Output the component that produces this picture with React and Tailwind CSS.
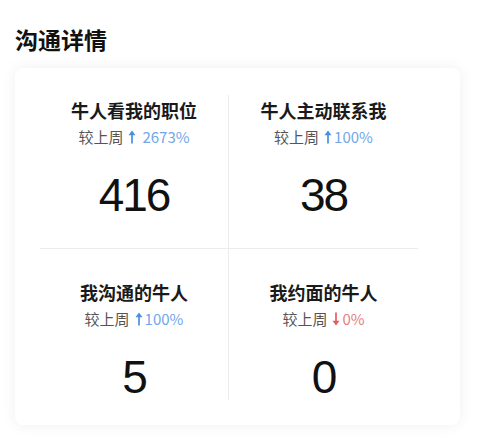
const stats = [
  { title: "牛人看我的职位", trend: "up", pct: "2673%", gap: true, value: "416" },
  { title: "牛人主动联系我", trend: "up", pct: "100%", value: "38" },
  { title: "我沟通的牛人", trend: "up", pct: "100%", value: "5" },
  { title: "我约面的牛人", trend: "down", pct: "0%", value: "0" },
];

const Arrow = ({ down }) => (
  <svg width="8" height="14" viewBox="0 0 8 14" className={down ? "rotate-180" : ""}>
    <path d="M4 0.5 L7.5 5.2 L4.85 5.2 L4.85 13.5 L3.15 13.5 L3.15 5.2 L0.5 5.2 Z" fill="currentColor" />
  </svg>
);

const Cell = ({ item, top, left }) => (
  <div
    className={`flex flex-col items-center ${top ? "pt-[3px] h-[154px] border-b border-[#ececec]" : "pt-[31px] h-[151px]"} ${
      left ? "border-r border-[#ececec]" : ""
    }`}
  >
    <div className="text-[18px] leading-6 font-bold text-[#1a1a1a]">{item.title}</div>
    <div className="mt-[5px] flex items-center text-[15px] leading-5 text-[#555]">
      <span>较上周</span>
      <span className={`ml-[5px] flex items-center ${item.trend === "up" ? "text-[#4a8fe0]" : "text-[#e25c63]"}`}>
        <Arrow down={item.trend === "down"} />
        <span className={`${item.gap ? "ml-[6px]" : "ml-[2px]"} ${item.trend === "up" ? "text-[#72a6e8]" : "text-[#e67d84]"}`}>
          {item.pct}
        </span>
      </span>
    </div>
    <div
      className="mt-[20px] text-[46px] leading-[56px] tracking-[-2px] text-[#111]"
      style={{ fontFamily: '"Liberation Sans", Arial, sans-serif' }}
    >
      {item.value}
    </div>
  </div>
);

export default function App() {
  return (
    <div
      className="w-[493px] h-[444px] bg-white overflow-hidden"
      style={{ fontFamily: '"Noto Sans CJK SC", "Noto Sans", sans-serif' }}
    >
      <div className="pl-[15px] pt-[24px] text-[23px] leading-[30px] font-bold text-[#111]">沟通详情</div>
      <div className="ml-[15px] mt-[14px] w-[445px] h-[357px] bg-white rounded-lg shadow-[0_0_14px_rgba(60,70,110,0.08)] pt-[27px] pl-[25px] pr-[42px]">
        <div className="grid grid-cols-2">
          <Cell item={stats[0]} top left />
          <Cell item={stats[1]} top />
          <Cell item={stats[2]} left />
          <Cell item={stats[3]} />
        </div>
      </div>
    </div>
  );
}
